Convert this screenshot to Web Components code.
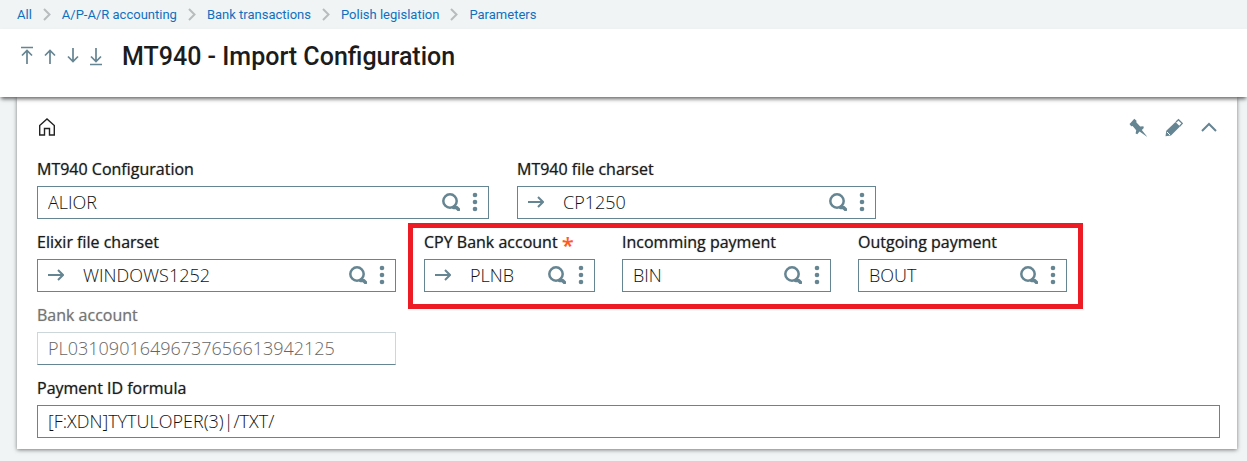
<!DOCTYPE html>
<html lang="en">
<head>
<meta charset="utf-8">
<meta name="viewport" content="width=device-width, initial-scale=1">
<title>MT940 - Import Configuration</title>
<style>
  body {
    margin: 0;
    min-height: 100vh;
    background: #f0f4f5;
    font-family: 'Open Sans', sans-serif;
    color: #1c1c1c;
  }
</style>
</head>
<body>
  <crumb-trail>
    <a href="#all">All</a>
    <a href="#accounting">A/P-A/R accounting</a>
    <a href="#bank">Bank transactions</a>
    <a href="#polish">Polish legislation</a>
    <a href="#parameters">Parameters</a>
  </crumb-trail>

  <page-header>MT940 - Import Configuration</page-header>

  <form-card>
    <field-row>
      <form-field size="large" value="ALIOR" lookup>MT940 Configuration</form-field>
      <form-field size="medium" value="CP1250" lookup jump>MT940 file charset</form-field>
    </field-row>
    <field-row>
      <form-field size="medium" value="WINDOWS1252" lookup jump>Elixir file charset</form-field>
      <field-row marked>
        <form-field size="tiny" value="PLNB" lookup jump required>CPY Bank account</form-field>
        <form-field size="small" value="BIN" lookup>Incomming payment</form-field>
        <form-field size="small" value="BOUT" lookup>Outgoing payment</form-field>
      </field-row>
    </field-row>
    <field-row>
      <form-field size="medium" value="PL03109016496737656613942125" disabled>Bank account</form-field>
    </field-row>
    <field-row>
      <form-field size="full" value="[F:XDN]TYTULOPER(3)|/TXT/">Payment ID formula</form-field>
    </field-row>
  </form-card>

<script>
const icons = {
  first: [14, 20, '<path d="M1 1.500h12M7 18V5M2 9.500l5-5 5 5" stroke-width="1.700"/>'],
  up: [14, 20, '<path d="M7 18V5M2 9.500l5-5 5 5" stroke-width="1.700"/>'],
  down: [14, 20, '<path d="M7 2v13M2 10.500l5 5 5-5" stroke-width="1.700"/>'],
  last: [14, 20, '<path d="M1 18.500h12M7 2v13M2 10.500l5 5 5-5" stroke-width="1.700"/>'],
  crumb: [8, 13, '<path d="M1 1l5.500 5.500L1 12" stroke-width="2"/>'],
  home: [20, 20, '<path d="M2.700 8.500L10 2l7.300 6.500V18H12.500v-6.500h-5V18H2.700z" stroke-width="1.400"/>'],
  pin: [18, 19, '<path d="M1.500 5L5.300.8l2.200 1.900-.2 1.600 3.900 4.300 3.200-.4.4 1.700-2 2L18.500 19l-8-5.400-2.200 2.600-1.700-.8.600-3.200L3.600 8l-1.400.2L.5 6z" fill="currentColor" stroke="none"/>'],
  pencil: [18, 19, '<path d="M.5 18.300l.8-5.500L10.500 4l4.500 4.500L6 17.600z" fill="currentColor" stroke="none"/><path d="M11 4l2.500-2.300 3.700 3.700L14.600 8.200" stroke-width="1.300"/><path d="M2 14l3 3" stroke="#fff" stroke-width="1"/>'],
  collapse: [16, 10, '<path d="M1 9l7-7 7 7" stroke-width="2"/>'],
  jump: [16, 14, '<path d="M0 7h15M10 2l5 5-5 5" stroke-width="2"/>'],
  search: [18, 18, '<circle cx="8" cy="8" r="6.700" stroke-width="2.500"/><path d="M11.500 14.500h3l2 2" stroke-width="3.500" stroke-linecap="round" stroke-linejoin="round"/>'],
  more: [6, 20, '<g fill="currentColor" stroke="none"><circle cx="3" cy="3" r="2.300"/><circle cx="3" cy="10" r="2.300"/><circle cx="3" cy="17" r="2.300"/></g>']
};

function icon(name) {
  const [w, h, body] = icons[name];
  return `<svg width="${w}" height="${h}" viewBox="0 0 ${w} ${h}" fill="none" stroke="currentColor" stroke-width="2" aria-hidden="true">${body}</svg>`;
}

const buttonStyle = `
  button {
    display: flex;
    align-items: center;
    justify-content: center;
    flex: none;
    margin: 0;
    padding: 0;
    border: 0;
    background: none;
    color: #668592;
    cursor: pointer;
  }
  svg { display: block; }
`;

class CrumbTrail extends HTMLElement {
  constructor() {
    super();
    this.attachShadow({ mode: 'open' });
    this.shadowRoot.innerHTML = `
      <style>
        :host { display: block; font: 13px/28px Roboto, sans-serif; }
        ol {
          display: flex;
          margin: 0;
          padding: 0 17px;
          list-style: none;
        }
        li { display: flex; align-items: center; height: 29px; padding-bottom: 0; }
        ::slotted(a) { color: #0f70c0; text-decoration: none; white-space: nowrap; }
        svg { display: block; margin: 0 11px; color: #b8bcbe; }
      </style>
      <nav aria-label="Breadcrumb"><ol></ol></nav>
    `;
  }

  connectedCallback() {
    const list = this.shadowRoot.querySelector('ol');
    list.innerHTML = '';
    // one named slot for each link
    [...this.children].forEach((link, i) => {
      link.slot = 'crumb' + i;
      const item = document.createElement('li');
      item.innerHTML = (i ? icon('crumb') : '') + `<slot name="crumb${i}"></slot>`;
      list.appendChild(item);
    });
  }
}

class PageHeader extends HTMLElement {
  constructor() {
    super();
    this.attachShadow({ mode: 'open' });
    this.shadowRoot.innerHTML = `
      <style>
        ${buttonStyle}
        :host {
          display: flex;
          align-items: center;
          gap: 19px;
          position: relative;
          z-index: 1;
          box-sizing: border-box;
          height: 68px;
          padding: 0 20px 14px;
          background: #fff;
          box-shadow: 0 3px 4px -1px rgba(0, 0, 0, .6);
        }
        .records { display: flex; gap: 9px; }
        h1 { margin: 0; padding-top: 2px; font: 500 25px/32px Roboto, sans-serif; }
      </style>
      <div class="records">
        <button type="button" aria-label="First record">${icon('first')}</button>
        <button type="button" aria-label="Previous record">${icon('up')}</button>
        <button type="button" aria-label="Next record">${icon('down')}</button>
        <button type="button" aria-label="Last record">${icon('last')}</button>
      </div>
      <h1><slot></slot></h1>
    `;
  }
}

class FormCard extends HTMLElement {
  constructor() {
    super();
    this.attachShadow({ mode: 'open' });
    this.shadowRoot.innerHTML = `
      <style>
        ${buttonStyle}
        :host {
          display: block;
          margin: 0 10px 12px 17px;
          padding: 20px 17px 11px 20px;
          background: #fff;
          box-shadow: 0 1px 4px rgba(0, 0, 0, .5);
        }
        .bar {
          display: flex;
          align-items: center;
          justify-content: space-between;
          height: 20px;
          margin-bottom: 23px;
        }
        .home { color: #222; }
        .tools { display: flex; gap: 18px; padding-right: 3px; }
        .fields { display: grid; gap: 14px; }
      </style>
      <div class="bar">
        <button type="button" class="home" aria-label="Home">${icon('home')}</button>
        <div class="tools">
          <button type="button" aria-label="Pin">${icon('pin')}</button>
          <button type="button" aria-label="Edit">${icon('pencil')}</button>
          <button type="button" aria-label="Collapse">${icon('collapse')}</button>
        </div>
      </div>
      <div class="fields"><slot></slot></div>
    `;
  }
}

class FieldRow extends HTMLElement {
  constructor() {
    super();
    this.attachShadow({ mode: 'open' });
    this.shadowRoot.innerHTML = `
      <style>
        :host { display: flex; gap: 28px; min-width: 0; }
        /* red frame drawn around a group of fields */
        :host([marked]) { position: relative; gap: 27px; }
        :host([marked])::before {
          content: '';
          position: absolute;
          inset: -10px -16px -17px;
          border: 5px solid #ed1c24;
          pointer-events: none;
        }
      </style>
      <slot></slot>
    `;
  }
}

class FormField extends HTMLElement {
  constructor() {
    super();
    this.attachShadow({ mode: 'open' });
    this.shadowRoot.innerHTML = `
      <style>
        ${buttonStyle}
        :host { display: block; flex: 0 1 359px; min-width: 0; }
        :host([size=large]) { flex-basis: 452px; }
        :host([size=small]) { flex-basis: 209px; }
        :host([size=tiny]) { flex-basis: 171px; }
        :host([size=full]) { flex: 1; }
        label {
          display: block;
          font-size: 16px;
          font-weight: 500;
          line-height: 18px;
          padding-bottom: 8px;
          white-space: nowrap;
          text-shadow: 0 0 1px rgba(28, 28, 28, .6);
        }
        .star {
          color: #ff5a1f;
          font-size: 22px;
          font-weight: 600;
          line-height: 10px;
          vertical-align: -5px;
          text-shadow: none;
        }
        .box {
          display: flex;
          align-items: center;
          box-sizing: border-box;
          height: 33px;
          padding-bottom: 2px;
          border: 1px solid #668592;
          background: #fff;
        }
        input {
          flex: 1;
          min-width: 0;
          box-sizing: border-box;
          height: 29px;
          margin: 0;
          padding: 0 0 0 10px;
          border: 0;
          outline: 0;
          background: none;
          color: #111;
          font: 300 18px/24px 'Open Sans', sans-serif;
        }
        .jump { width: 35px; }
        .search { width: 18px; margin-right: 12px; }
        .more { width: 6px; margin-right: 10px; }
        :host([disabled]) label { color: #757575; text-shadow: 0 0 1px rgba(117, 117, 117, .6); }
        :host([disabled]) input { color: #666; }
        :host([disabled]) .box { border-color: #ccd6db #ccd6db #668592; }
      </style>
      <label for="input"><slot></slot></label>
      <div class="box"><input id="input" type="text"></div>
    `;
  }

  connectedCallback() {
    const input = this.shadowRoot.querySelector('input');
    const label = this.shadowRoot.querySelector('label');
    input.value = this.getAttribute('value') || '';
    input.disabled = this.hasAttribute('disabled');
    input.required = this.hasAttribute('required');
    if (input.required) {
      label.insertAdjacentHTML('beforeend', ' <span class="star">*</span>');
    }
    if (this.hasAttribute('jump')) {
      input.insertAdjacentHTML('beforebegin', `<button type="button" class="jump" aria-label="Open record">${icon('jump')}</button>`);
    }
    if (this.hasAttribute('lookup')) {
      input.insertAdjacentHTML('afterend', `
        <button type="button" class="search" aria-label="Search">${icon('search')}</button>
        <button type="button" class="more" aria-label="More actions">${icon('more')}</button>`);
    }
  }
}

customElements.define('crumb-trail', CrumbTrail);
customElements.define('page-header', PageHeader);
customElements.define('form-card', FormCard);
customElements.define('field-row', FieldRow);
customElements.define('form-field', FormField);
</script>
</body>
</html>
